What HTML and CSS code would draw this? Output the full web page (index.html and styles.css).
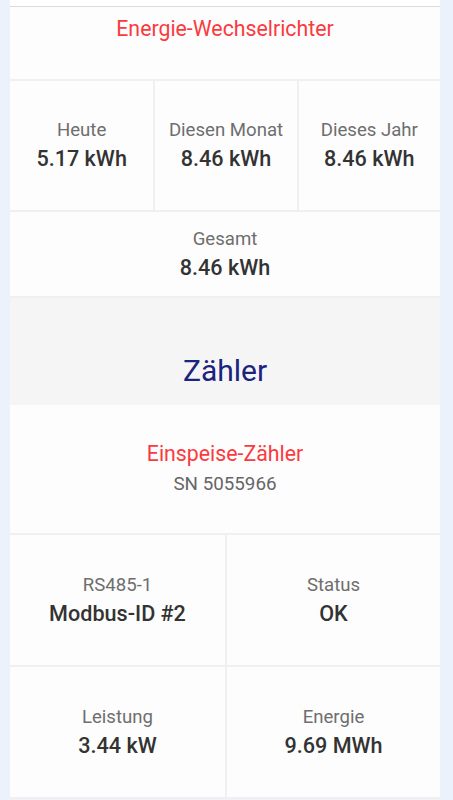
FILE: index.html
```html
<!DOCTYPE html>
<html>
<head>
    <title>Anlage</title>
    <link rel="stylesheet" href="styles.css">
</head>
<body>
    <div class="card">
        <div class="top-strip"></div>

        <div class="device-title">
            <span class="red">Energie-Wechselrichter</span>
        </div>

        <div class="row three">
            <div class="cell">
                <div class="label">Heute</div>
                <div class="value">5.17 kWh</div>
            </div>
            <div class="cell">
                <div class="label">Diesen Monat</div>
                <div class="value">8.46 kWh</div>
            </div>
            <div class="cell">
                <div class="label">Dieses Jahr</div>
                <div class="value">8.46 kWh</div>
            </div>
        </div>

        <div class="row one">
            <div class="cell total">
                <div class="label">Gesamt</div>
                <div class="value">8.46 kWh</div>
            </div>
        </div>

        <div class="section-head">
            <h2>Zähler</h2>
        </div>

        <div class="device">
            <div class="red">Einspeise-Zähler</div>
            <div class="serial">SN 5055966</div>
        </div>

        <div class="row two">
            <div class="cell">
                <div class="label">RS485-1</div>
                <div class="value">Modbus-ID #2</div>
            </div>
            <div class="cell">
                <div class="label">Status</div>
                <div class="value">OK</div>
            </div>
        </div>
        <div class="row two">
            <div class="cell">
                <div class="label">Leistung</div>
                <div class="value">3.44 kW</div>
            </div>
            <div class="cell">
                <div class="label">Energie</div>
                <div class="value">9.69 MWh</div>
            </div>
        </div>
    </div>
</body>
</html>
```

FILE: styles.css
```css
body {
    margin: 0;
    background-color: #ecf2fb;
    font-family: Roboto, "Liberation Sans", sans-serif;
}

.card {
    margin: 0 13px 0 10px;
    background-color: #fdfdfd;
}

.top-strip {
    height: 6px;
    border-bottom: 1px solid #dcdcdc;
    background-color: #fff;
}

.red {
    color: #fb3a3f;
    font-size: 21.3px;
}

.device-title {
    height: 63px;
    padding-top: 9px;
    text-align: center;
    line-height: 25px;
    border-bottom: 2px solid #f0f0f0;
}

.row {
    display: grid;
    border-bottom: 2px solid #f0f0f0;
}

.three {
    grid-template-columns: 1fr 1fr 1fr;
    height: 129px;
}

.two {
    grid-template-columns: 1fr 1fr;
    height: 130px;
}

.one {
    height: 84px;
}

.cell {
    display: flex;
    flex-direction: column;
    justify-content: center;
    align-items: center;
    border-left: 2px solid #f0f0f0;
}

.cell:first-child {
    border-left: none;
}

.label {
    color: #6e6e6e;
    font-size: 18.6px;
    line-height: 25px;
}

.value {
    color: #333;
    font-size: 21.6px;
    font-weight: 500;
    line-height: 28px;
    margin-top: 2px;
}

.total {
    height: 100%;
}

.section-head {
    background-color: #f5f5f5;
    height: 107px;
    display: flex;
    justify-content: center;
    align-items: flex-end;
}

.section-head h2 {
    margin: 0 0 17px 0;
    color: #1a237e;
    font-size: 30px;
    font-weight: 400;
    line-height: 35px;
}

.device {
    height: 128px;
    display: flex;
    flex-direction: column;
    justify-content: center;
    align-items: center;
    border-bottom: 2px solid #f0f0f0;
    line-height: 30px;
}

.serial {
    color: #666;
    font-size: 18.8px;
}
```
